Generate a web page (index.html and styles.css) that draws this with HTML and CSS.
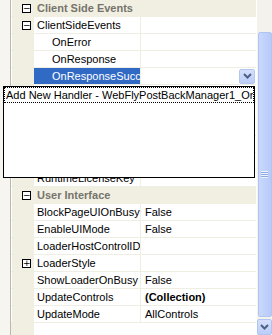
FILE: index.html
```html
<!DOCTYPE html>
<html>
<head>
    <title>Property Grid</title>
    <link rel="stylesheet" href="styles.css">
</head>
<body>
    <div class="pane">
        <div class="frame"></div>
        <div class="grid">
            <div class="row category">
                <div class="gutter"><span class="toggle">&minus;</span></div>
                <div class="name">Client Side Events</div>
            </div>
            <div class="row">
                <div class="gutter"><span class="toggle">&minus;</span></div>
                <div class="name">ClientSideEvents</div>
                <div class="value"></div>
            </div>
            <div class="row">
                <div class="gutter"></div>
                <div class="name sub">OnError</div>
                <div class="value"></div>
            </div>
            <div class="row">
                <div class="gutter"></div>
                <div class="name sub">OnResponse</div>
                <div class="value"></div>
            </div>
            <div class="row selected">
                <div class="gutter"></div>
                <div class="name sub">OnResponseSuccess</div>
                <div class="value">
                    <span class="drop">
                        <svg width="9" height="6" viewBox="0 0 9 6"><polyline points="1,1 4.5,4.5 8,1" fill="none" stroke="#4d6185" stroke-width="2"/></svg>
                    </span>
                </div>
            </div>
            <!-- rows hidden behind the dropdown list -->
            <div class="row"><div class="gutter"></div><div class="name sub"></div><div class="value"></div></div>
            <div class="row"><div class="gutter"></div><div class="name sub"></div><div class="value"></div></div>
            <div class="row"><div class="gutter"></div><div class="name sub"></div><div class="value"></div></div>
            <div class="row"><div class="gutter"></div><div class="name"></div><div class="value"></div></div>
            <div class="row"><div class="gutter"></div><div class="name"></div><div class="value"></div></div>
            <div class="row">
                <div class="gutter"></div>
                <div class="name">RuntimeLicenseKey</div>
                <div class="value"></div>
            </div>
            <div class="row category">
                <div class="gutter"><span class="toggle">&minus;</span></div>
                <div class="name">User Interface</div>
            </div>
            <div class="row">
                <div class="gutter"></div>
                <div class="name">BlockPageUIOnBusy</div>
                <div class="value">False</div>
            </div>
            <div class="row">
                <div class="gutter"></div>
                <div class="name">EnableUIMode</div>
                <div class="value">False</div>
            </div>
            <div class="row">
                <div class="gutter"></div>
                <div class="name">LoaderHostControlID</div>
                <div class="value"></div>
            </div>
            <div class="row">
                <div class="gutter"><span class="toggle">+</span></div>
                <div class="name">LoaderStyle</div>
                <div class="value"></div>
            </div>
            <div class="row">
                <div class="gutter"></div>
                <div class="name">ShowLoaderOnBusy</div>
                <div class="value">False</div>
            </div>
            <div class="row">
                <div class="gutter"></div>
                <div class="name">UpdateControls</div>
                <div class="value bold">(Collection)</div>
            </div>
            <div class="row">
                <div class="gutter"></div>
                <div class="name">UpdateMode</div>
                <div class="value">AllControls</div>
            </div>
            <div class="rest"></div>

            <!-- handler dropdown list -->
            <div class="popup">
                <div class="item">Add New Handler - WebFlyPostBackManager1_OnResponseSuccess</div>
            </div>
        </div>
        <div class="scrollbar">
            <div class="thumb">
                <span class="grip"></span>
            </div>
            <div class="arrow">
                <svg width="9" height="6" viewBox="0 0 9 6"><polyline points="1,1 4.5,4.5 8,1" fill="none" stroke="#4d6185" stroke-width="2"/></svg>
            </div>
        </div>
    </div>
</body>
</html>
```

FILE: styles.css
```css
body {
    margin: 0;
    font-family: "Liberation Sans", Arial, sans-serif;
    font-size: 11px;
    color: #000;
}
.pane {
    display: flex;
    width: 272px;
    height: 335px;
    overflow: hidden;
    background: #fff;
}
.frame {
    width: 10px;
    background: #f6f5ef;
    border-right: 1px solid #b9b8b0;
}
.grid {
    position: relative;
    width: 245px;
    display: flex;
    flex-direction: column;
}
.row {
    display: flex;
    height: 16px;
    border-bottom: 1px solid #efeee3;
    line-height: 16px;
    flex: none;
}
.gutter {
    width: 23px;
    background: #f1efe2;
    display: flex;
    align-items: center;
    border-left: 1px solid #fff;
    box-sizing: border-box;
}
.toggle {
    width: 7px;
    height: 7px;
    margin-left: 10px;
    border: 1px solid #000;
    background: #fff;
    font-size: 9px;
    line-height: 7px;
    text-align: center;
    font-family: "DejaVu Sans", sans-serif;
}
.name {
    width: 103px;
    padding-left: 3px;
    border-right: 1px solid #efeee3;
    white-space: nowrap;
    overflow: hidden;
}
.name.sub {
    width: 88px;
    padding-left: 18px;
}
.value {
    flex: 1;
    padding-left: 4px;
    display: flex;
    align-items: center;
    white-space: nowrap;
}
.bold {
    font-weight: bold;
}
.category {
    background: #f1efe2;
    border-bottom-color: #f1efe2;
}
.category .name {
    width: auto;
    flex: 1;
    border-right: none;
    font-weight: bold;
    color: #75746b;
}
.selected .name {
    background: #316ac5;
    color: #fff;
}
.drop {
    width: 14px;
    height: 13px;
    margin-left: auto;
    margin-right: 1px;
    border: 1px solid #b4c6f0;
    border-radius: 2px;
    background: linear-gradient(#d5e0fc, #bccdf8);
    display: flex;
    align-items: center;
    justify-content: center;
}
.rest {
    flex: 1;
    display: flex;
}
.rest::before {
    content: "";
    width: 23px;
    background: #f1efe2;
}
.popup {
    position: absolute;
    left: -8px;
    top: 86px;
    width: 250px;
    height: 90px;
    border: 1px solid #000;
    background: #fff;
    overflow: hidden;
}
.item {
    height: 14px;
    line-height: 14px;
    border: 1px dotted #000;
    padding-left: 1px;
    white-space: nowrap;
    overflow: hidden;
}
.scrollbar {
    width: 16px;
    background: #f3f2ec;
    border-left: 1px solid #fff;
    box-sizing: border-box;
    display: flex;
    flex-direction: column;
    align-items: center;
}
.thumb {
    width: 12px;
    height: 284px;
    margin-top: 32px;
    border: 1px solid #b1c5f3;
    border-radius: 2px;
    background: linear-gradient(90deg, #c9d8fc, #b7cbf9);
    display: flex;
    align-items: center;
    justify-content: center;
}
.grip {
    width: 7px;
    height: 7px;
    background: repeating-linear-gradient(#eef3fe 0 1px, #8fa9e6 1px 2px);
}
.arrow {
    width: 13px;
    height: 14px;
    margin-top: 2px;
    border: 1px solid #b1c5f3;
    border-radius: 2px;
    background: linear-gradient(#d5e0fc, #bccdf8);
    display: flex;
    align-items: center;
    justify-content: center;
}
```
